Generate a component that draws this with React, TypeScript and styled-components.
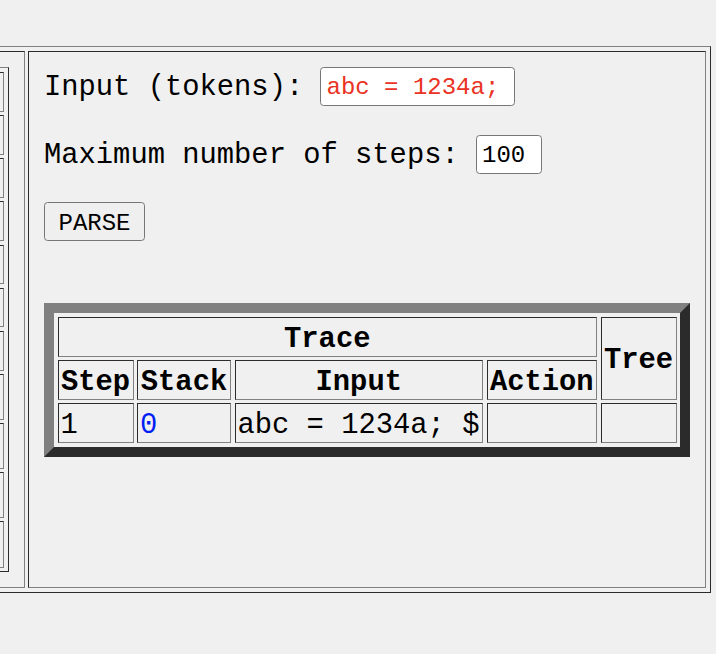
import React from "react";
import styled, { createGlobalStyle } from "styled-components";

const LIGHT = "#808080";
const DARK = "#2b2b2b";

const GlobalStyle = createGlobalStyle`
  html, body {
    margin: 0;
    padding: 0;
    background: #f0f0f0;
  }
  body {
    font-family: "Liberation Mono", "Courier New", monospace;
    font-size: 28.8px;
    color: #000;
    overflow: hidden;
  }
`;

const Page = styled.div`
  padding-top: 46px;
  margin-left: -180px;
`;

const Frame = styled.div`
  display: flex;
  gap: 3px;
  width: max-content;
  padding: 4px;
  border: 1px solid;
  border-color: ${LIGHT} ${DARK} ${DARK} ${LIGHT};
`;

const Pane = styled.div<{ $width: number; $stretch?: boolean }>`
  box-sizing: border-box;
  width: ${(p) => p.$width}px;
  padding: 15px;
  border: 1px solid;
  border-color: ${DARK} ${LIGHT} ${LIGHT} ${DARK};
  display: flex;
  flex-direction: column;
  align-items: ${(p) => (p.$stretch ? "stretch" : "flex-start")};
`;

const RuleList = styled.div`
  display: flex;
  flex-direction: column;
  gap: 3.5px;
  padding: 4px 4px 3.5px;
  border: 1px solid;
  border-color: ${LIGHT} ${DARK} ${DARK} ${LIGHT};
`;

const RuleCell = styled.div<{ $h: number }>`
  box-sizing: border-box;
  height: ${(p) => p.$h}px;
  border: 1px solid;
  border-color: ${DARK} ${LIGHT} ${LIGHT} ${DARK};
`;

const Field = styled.div<{ $mt?: number }>`
  display: flex;
  align-items: center;
  gap: 0.6em;
  margin-top: ${(p) => p.$mt ?? 0}px;
  white-space: pre;
`;

const Label = styled.span`
  font-size: 28.8px;
  padding-top: 1px;
`;

const TextBox = styled.input<{ $w: number; $color?: string }>`
  box-sizing: border-box;
  width: ${(p) => p.$w}px;
  height: 39px;
  margin: 0;
  padding: 2px 5px 0;
  border: 1px solid #767676;
  border-radius: 3.6px;
  background: #fff;
  color: ${(p) => p.$color ?? "#000"};
  font-family: "Liberation Mono", "Courier New", monospace;
  font-size: 24px;
  outline: none;
`;

const ParseButton = styled.button`
  box-sizing: border-box;
  margin-top: 28px;
  width: 101px;
  height: 39px;
  padding: 4px 0 0;
  border: 1px solid #767676;
  border-radius: 3.6px;
  background: #efefef;
  color: #000;
  font-family: "Liberation Mono", "Courier New", monospace;
  font-size: 24px;
`;

const Trace = styled.div`
  margin-top: 62px;
  display: grid;
  grid-template-columns: 76px 94px 248.5px 110.5px 76px;
  grid-template-rows: 40px 39.5px 40px;
  gap: 3.5px;
  padding: 3.5px;
  border: 10px solid;
  border-color: ${LIGHT} ${DARK} ${DARK} ${LIGHT};
`;

const Cell = styled.div<{ $head?: boolean; $span?: number; $rows?: number; $color?: string }>`
  box-sizing: border-box;
  border: 1px solid;
  border-color: ${DARK} ${LIGHT} ${LIGHT} ${DARK};
  padding: 7px 2px 0;
  display: flex;
  align-items: center;
  justify-content: ${(p) => (p.$head ? "center" : "flex-start")};
  font-weight: ${(p) => (p.$head ? "bold" : "normal")};
  color: ${(p) => p.$color ?? "#000"};
  grid-column: span ${(p) => p.$span ?? 1};
  grid-row: span ${(p) => p.$rows ?? 1};
  white-space: pre;
  line-height: 1.133;
`;

const ruleHeights = [39.67, 39.67, 39.67, 39.67, 39.67, 39.67, 39.67, 45.5, 45.5, 45.5, 46.5];

export default function App() {
  return (
    <>
      <GlobalStyle />
      <Page>
        <Frame>
          <Pane $width={200} $stretch>
            <RuleList>
              {ruleHeights.map((h, i) => (
                <RuleCell key={i} $h={h} />
              ))}
            </RuleList>
          </Pane>
          <Pane $width={678}>
            <Field>
              <Label>Input (tokens):</Label>
              <TextBox $w={195} $color="rgb(234, 51, 35)" defaultValue="abc = 1234a;" />
            </Field>
            <Field $mt={29}>
              <Label>Maximum number of steps:</Label>
              <TextBox $w={66} defaultValue="100" />
            </Field>
            <ParseButton>PARSE</ParseButton>
            <Trace>
              <Cell $head $span={4}>Trace</Cell>
              <Cell $head $rows={2}>Tree</Cell>
              <Cell $head>Step</Cell>
              <Cell $head>Stack</Cell>
              <Cell $head>Input</Cell>
              <Cell $head>Action</Cell>
              <Cell>1</Cell>
              <Cell $color="rgb(0, 30, 245)">0</Cell>
              <Cell>abc = 1234a; $</Cell>
              <Cell />
              <Cell />
            </Trace>
          </Pane>
        </Frame>
      </Page>
    </>
  );
}
